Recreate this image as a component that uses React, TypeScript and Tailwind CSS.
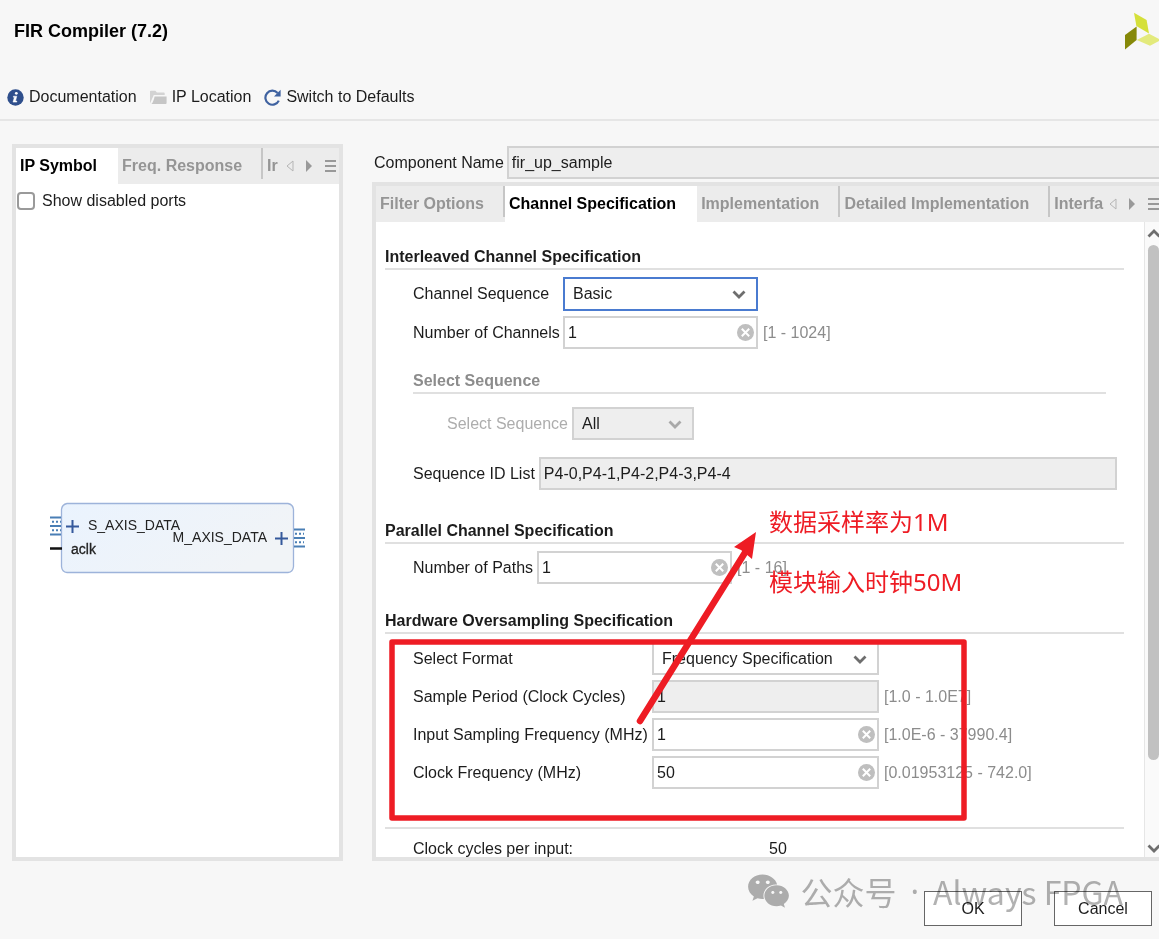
import { useState } from "react";
import type { ReactNode } from "react";
import clsx from "clsx";
import { FaWeixin } from "react-icons/fa";

function Chevron({ className }: { className?: string }) {
  return (
    <svg viewBox="0 0 14 9" className={clsx("w-[14px] h-[9px]", className)} fill="none">
      <path d="M1.5 1.5L7 7l5.5-5.5" stroke="currentColor" strokeWidth="2.8" />
    </svg>
  );
}

function Logo() {
  return (
    <svg viewBox="0 0 35 38" className="w-[35px] h-[38px] shrink-0" aria-hidden="true">
      <polygon points="10,0.7 22.6,8 25,21.6 12.4,14" fill="#d5e03a" />
      <polygon points="1,23 12.6,14.6 12.6,28 1,37.4" fill="#868909" />
      <polygon points="12.8,28 25,21.8 37,28 26,33.8" fill="#e3ea7c" />
    </svg>
  );
}

function InfoIcon() {
  return (
    <svg viewBox="0 0 17 17" className="w-[17px] h-[17px]">
      <circle cx="8.5" cy="8.5" r="8.2" fill="#2f4f8c" />
      <circle cx="9.3" cy="4.3" r="1.4" fill="#fff" />
      <path
        d="M6.4 7.2h3.4l-1.3 4.9h1.3v1H6l1.4-4.9h-1z"
        fill="#fff"
        stroke="#fff"
        strokeWidth="0.5"
      />
    </svg>
  );
}

function FolderIcon() {
  return (
    <svg viewBox="0 0 17 15" className="w-[17px] h-[15px]">
      <path d="M0 13.400V1.600q0-.8.8-.8h4.600l1.500 1.800h7q.8 0 .8.800V5H3.800Q2 9 0 13.400z" fill="#d3d3d3" />
      <path d="M4.600 6.500h12v6.600a1 1 0 0 1-1 1H1.400C3 12.500 4 9.500 4.600 6.500z" fill="#c6c6c6" />
    </svg>
  );
}

function ResetIcon() {
  return (
    <svg viewBox="0 0 17 17" className="w-[17px] h-[17px]">
      <path
        d="M13.600 4A7 7 0 1 0 14.800 11.600"
        fill="none"
        stroke="#3f62a0"
        strokeWidth="2.2"
      />
      <path d="M16.600 .8v6.600H10z" fill="#3f62a0" />
    </svg>
  );
}

function ToolButton({ icon, children }: { icon: ReactNode; children: ReactNode }) {
  return (
    <button type="button" className="flex items-center gap-[5px]">
      {icon}
      {children}
    </button>
  );
}

interface TabBarProps {
  tabs: string[];
  active: string;
  onSelect: (tab: string) => void;
  clipped: string;
}

function TabBar({ tabs, active, onSelect, clipped }: TabBarProps) {
  const activeIndex = tabs.indexOf(active);

  return (
    <div className="flex h-9 shrink-0 bg-[#ececec] font-bold text-[#959595]">
      {tabs.map((tab, i) => (
        <button
          key={tab}
          type="button"
          onClick={() => onSelect(tab)}
          className={clsx(
            "relative flex shrink-0 items-center whitespace-nowrap pl-1 pr-[21px]",
            i === activeIndex && "bg-white text-black",
          )}
        >
          {tab}
          {i !== activeIndex && (
            <span className="absolute right-0 top-0 h-[31px] w-[2px] bg-[#c6c6c6]" />
          )}
        </button>
      ))}
      <button type="button" className="pl-1">
        {clipped}
      </button>
      <div className="ml-auto flex shrink-0 items-center">
        <button type="button" aria-label="Scroll tabs left">
          <svg viewBox="0 0 8 12" className="w-2 h-3">
            <path d="M7 1v10L1 6z" fill="none" stroke="#b5b5b5" />
          </svg>
        </button>
        <button type="button" aria-label="Scroll tabs right" className="ml-[11px]">
          <svg viewBox="0 0 8 12" className="w-2 h-3">
            <path d="M1 0v12l6-6z" fill="#999" />
          </svg>
        </button>
        <button type="button" aria-label="Tab list" className="ml-3">
          <svg viewBox="0 0 11 12" className="w-[11px] h-3">
            <path d="M0 1h11M0 6h11M0 11h11" stroke="#999" strokeWidth="2" />
          </svg>
        </button>
      </div>
    </div>
  );
}

function SymbolDiagram() {
  return (
    <svg
      viewBox="0 0 257 72"
      className="w-[257px] h-[72px] font-['Liberation_Sans',Arial,sans-serif] text-sm"
    >
      <defs>
        <linearGradient id="block" x1="0" y1="0" x2="1" y2="0.4">
          <stop offset="0" stopColor="#eaf3fe" />
          <stop offset="1" stopColor="#f1f4f7" />
        </linearGradient>
      </defs>
      <path
        d="M18 1.500h221q5 1 5.500 6v57q-.5 5.500-5.500 6H18q-5-.5-5.500-6v-57q.5-5 5.500-6z"
        fill="url(#block)"
        stroke="#9db3da"
        strokeWidth="1.300"
      />
      <g stroke="#4a7fb5" strokeWidth="2">
        <path d="M1 15.500h11M1 24h11M1 32.500h11M245 27.500h11M245 36h11M245 44.500h11" />
        <path
          d="M3 19.800h9M3 28.200h9M246 31.800h9M246 40.200h9"
          strokeDasharray="2 2"
          strokeWidth="2"
        />
      </g>
      <path
        d="M17 24.500h13M23.500 18v13M226 36.500h13M232.500 30v13"
        stroke="#35599c"
        strokeWidth="2"
      />
      <path d="M1 46.500h12" stroke="#111" strokeWidth="2.500" />
      <g fill="#222">
        <text x="39" y="28">S_AXIS_DATA</text>
        <text x="218" y="40" textAnchor="end">M_AXIS_DATA</text>
        <text x="22" y="52" stroke="#222" strokeWidth="0.300">aclk</text>
      </g>
    </svg>
  );
}

function SectionTitle({ className, children }: { className?: string; children: ReactNode }) {
  return (
    <h2
      className={clsx("border-b-2 border-[#e0e0e0] font-bold leading-[22px]", className)}
    >
      {children}
    </h2>
  );
}

interface SelectFieldProps {
  id: string;
  value: string;
  className?: string;
  focused?: boolean;
  disabled?: boolean;
}

function SelectField({ id, value, className, focused, disabled }: SelectFieldProps) {
  return (
    <div className={clsx("relative shrink-0", className)}>
      <select
        id={id}
        disabled={disabled}
        defaultValue={value}
        className={clsx(
          "block w-full appearance-none border-2 pl-2 pr-8 text-[#1c1c1c] opacity-100 outline-none",
          focused ? "h-[34px] border-[#4a7bd0]" : "h-[33px] border-[#d2d2d2]",
          disabled ? "bg-[#eeeeee]" : "bg-white",
        )}
      >
        <option>{value}</option>
      </select>
      <Chevron
        className={clsx(
          "pointer-events-none absolute right-3 top-[13px]",
          disabled ? "text-[#a8a8a8]" : "text-[#6e6e6e]",
        )}
      />
    </div>
  );
}

interface TextFieldProps {
  id: string;
  value: string;
  className?: string;
  disabled?: boolean;
}

function TextField({ id, value, className, disabled }: TextFieldProps) {
  const [text, setText] = useState(value);

  return (
    <div className={clsx("relative", className)}>
      <input
        id={id}
        type="text"
        value={text}
        disabled={disabled}
        onChange={(e) => setText(e.target.value)}
        className={clsx(
          "block h-[33px] w-full border-2 border-[#d2d2d2] px-[3px] text-[#1c1c1c] outline-none",
          disabled ? "bg-[#eeeeee]" : "bg-white",
        )}
      />
      {!disabled && (
        <button
          type="button"
          aria-label="Clear"
          onClick={() => setText("")}
          className="absolute right-1 top-2"
        >
          <svg viewBox="0 0 17 17" className="w-[17px] h-[17px]">
            <circle cx="8.500" cy="8.500" r="8.500" fill="#bfbfbf" />
            <path d="M4.800 4.800l7.400 7.400M12.200 4.800l-7.400 7.400" stroke="#fff" strokeWidth="2" />
          </svg>
        </button>
      )}
    </div>
  );
}

function Range({ children }: { children: ReactNode }) {
  return <span className="pl-[5px] whitespace-nowrap text-[#8c8c8c]">{children}</span>;
}

function Annotations() {
  return (
    <div className="pointer-events-none absolute left-0 top-0 whitespace-nowrap font-['Noto_Sans','Noto_Sans_CJK_SC',sans-serif] text-2xl text-[#ee1c24]">
      <svg width="600" height="610" className="block" fill="none">
        <rect
          x="16"
          y="420"
          width="572"
          height="176"
          stroke="#ee1c24"
          strokeWidth="5.500"
          strokeLinejoin="round"
        />
        <path d="M264 499L370 329" stroke="#ee1c24" strokeWidth="6.500" strokeLinecap="round" />
        <path d="M380 310l-4 27-6-5-5-4-7-3z" fill="#ee1c24" />
      </svg>
      <span className="absolute left-[393px] top-[284px] leading-8">数据采样率为1M</span>
      <span className="absolute left-[393px] top-[344px] leading-8">模块输入时钟50M</span>
    </div>
  );
}

function ChannelSpecification() {
  return (
    <div className="relative min-w-0 flex-1 overflow-hidden pl-[9px] pr-5 pt-6">
      <SectionTitle>Interleaved Channel Specification</SectionTitle>
      <div className="pl-7 pt-[7px]">
        <div className="flex items-center">
          <label htmlFor="channel-sequence" className="w-[150px]">
            Channel Sequence
          </label>
          <SelectField id="channel-sequence" value="Basic" focused className="w-[195px]" />
        </div>
        <div className="mt-[5px] flex items-center">
          <label htmlFor="channels" className="w-[150px]">
            Number of Channels
          </label>
          <TextField id="channels" value="1" className="w-[195px]" />
          <Range>[1 - 1024]</Range>
        </div>
        <SectionTitle className="mr-[18px] mt-[21px] text-[#8c8c8c]">
          Select Sequence
        </SectionTitle>
        <div className="mt-[13px] flex items-center gap-1 pl-[34px]">
          <label htmlFor="select-sequence" className="text-[#adadad]">
            Select Sequence
          </label>
          <SelectField id="select-sequence" value="All" disabled className="w-[122px]" />
        </div>
        <div className="mr-[7px] mt-[17px] flex items-center gap-1">
          <label htmlFor="sequence-list" className="whitespace-nowrap">
            Sequence ID List
          </label>
          <TextField
            id="sequence-list"
            value="P4-0,P4-1,P4-2,P4-3,P4-4"
            disabled
            className="flex-1"
          />
        </div>
      </div>

      <SectionTitle className="mt-[30px]">Parallel Channel Specification</SectionTitle>
      <div className="flex items-center pl-7 pt-[7px]">
        <label htmlFor="paths" className="pr-1">
          Number of Paths
        </label>
        <TextField id="paths" value="1" className="w-[195px]" />
        <Range>[1 - 16]</Range>
      </div>

      <SectionTitle className="mt-[26px]">Hardware Oversampling Specification</SectionTitle>
      <div className="flex flex-col gap-[5px] pl-7 pt-2">
        <div className="flex items-center">
          <label htmlFor="format" className="w-[239px]">
            Select Format
          </label>
          <SelectField id="format" value="Frequency Specification" className="w-[227px]" />
        </div>
        <div className="flex items-center">
          <label htmlFor="period" className="w-[239px]">
            Sample Period (Clock Cycles)
          </label>
          <TextField id="period" value="1" disabled className="w-[227px]" />
          <Range>[1.0 - 1.0E7]</Range>
        </div>
        <div className="flex items-center">
          <label htmlFor="sampling" className="w-[239px] whitespace-nowrap">
            Input Sampling Frequency (MHz)
          </label>
          <TextField id="sampling" value="1" className="w-[227px]" />
          <Range>[1.0E-6 - 37990.4]</Range>
        </div>
        <div className="flex items-center">
          <label htmlFor="clock" className="w-[239px]">
            Clock Frequency (MHz)
          </label>
          <TextField id="clock" value="50" className="w-[227px]" />
          <Range>[0.01953125 - 742.0]</Range>
        </div>
      </div>

      <div className="mt-[38px] flex border-t-2 border-[#e0e0e0] pl-7 pt-2 leading-6">
        <span className="w-[356px]">Clock cycles per input:</span>
        <span>50</span>
      </div>
      <Annotations />
    </div>
  );
}

function ScrollBar() {
  return (
    <div className="flex w-[15px] shrink-0 flex-col items-center border-l border-[#e6e6e6] bg-[#fafafa] pl-[3px] text-[#6e6e6e]">
      <Chevron className="my-[7px] shrink-0 rotate-180" />
      <div className="w-[11px] flex-[515] rounded-full bg-[#c1c1c1]" />
      <div className="flex-[84]" />
      <Chevron className="mb-1 shrink-0" />
    </div>
  );
}

export default function App() {
  const [leftTab, setLeftTab] = useState("IP Symbol");
  const [rightTab, setRightTab] = useState("Channel Specification");

  return (
    <div className="flex h-screen flex-col overflow-hidden bg-[#f7f7f7] font-['Liberation_Sans',Arial,sans-serif] text-base text-[#1c1c1c]">
      <header className="shrink-0 border-b-2 border-[#e6e6e6] pb-[10px] pt-3">
        <div className="flex items-center justify-between pl-[14px]">
          <h1 className="text-lg font-bold text-black">FIR Compiler (7.2)</h1>
          <Logo />
        </div>
        <div className="mt-[35px] flex h-6 items-center gap-[13px] pl-[7px]">
          <ToolButton icon={<InfoIcon />}>Documentation</ToolButton>
          <ToolButton icon={<FolderIcon />}>IP Location</ToolButton>
          <ToolButton icon={<ResetIcon />}>Switch to Defaults</ToolButton>
        </div>
      </header>

      <main className="flex min-h-0 flex-1 gap-[29px] pl-3 pt-[23px]">
        <section className="flex w-[331px] shrink-0 flex-col border-4 border-[#e3e3e3] bg-white">
          <div className="bg-[#ececec] pr-[3px]">
            <TabBar
              tabs={["IP Symbol", "Freq. Response"]}
              active={leftTab}
              onSelect={setLeftTab}
              clipped="Ir"
            />
          </div>
          <label className="flex h-[34px] items-center gap-[7px] pl-px">
            <input
              type="checkbox"
              className="h-[18px] w-[18px] appearance-none rounded-[4px] border-2 border-[#9a9a9a] bg-white"
            />
            Show disabled ports
          </label>
          <div className="flex flex-1 items-center justify-center">
            <SymbolDiagram />
          </div>
        </section>

        <section className="flex min-w-0 flex-1 flex-col">
          <div className="mb-[3px] mt-[2px] flex items-center gap-[3px] whitespace-nowrap pl-[2px]">
            <label htmlFor="component-name">Component Name</label>
            <input
              id="component-name"
              type="text"
              readOnly
              value="fir_up_sample"
              className="h-[33px] min-w-0 flex-1 border-2 border-r-0 border-[#d2d2d2] bg-[#eeeeee] px-[3px] outline-none"
            />
          </div>
          <div className="flex min-h-0 flex-1 flex-col border-4 border-r-0 border-[#e3e3e3] bg-white">
            <TabBar
              tabs={[
                "Filter Options",
                "Channel Specification",
                "Implementation",
                "Detailed Implementation",
              ]}
              active={rightTab}
              onSelect={setRightTab}
              clipped="Interfa"
            />
            <div className="flex min-h-0 flex-1">
              <ChannelSpecification />
              <ScrollBar />
            </div>
          </div>
        </section>
      </main>

      <footer className="relative flex shrink-0 justify-end gap-8 pb-[13px] pr-[7px] pt-[30px]">
        <button type="button" className="h-[35px] w-[98px] border border-[#666666] bg-white">
          OK
        </button>
        <button type="button" className="h-[35px] w-[98px] border border-[#666666] bg-white">
          Cancel
        </button>
        <div className="pointer-events-none absolute right-9 top-[6px] flex items-center gap-[10px] whitespace-nowrap font-['Noto_Sans_CJK_SC',sans-serif] text-[32px] leading-[48px] text-[#b2b2b2] mix-blend-multiply">
          <FaWeixin className="h-[38px] w-[43px]" />
          <span className="flex items-center gap-[14px]">
            <span>公众号</span>
            <span className="font-['Noto_Sans',sans-serif]">·</span>
            <span>Always FPGA</span>
          </span>
        </div>
      </footer>
    </div>
  );
}
